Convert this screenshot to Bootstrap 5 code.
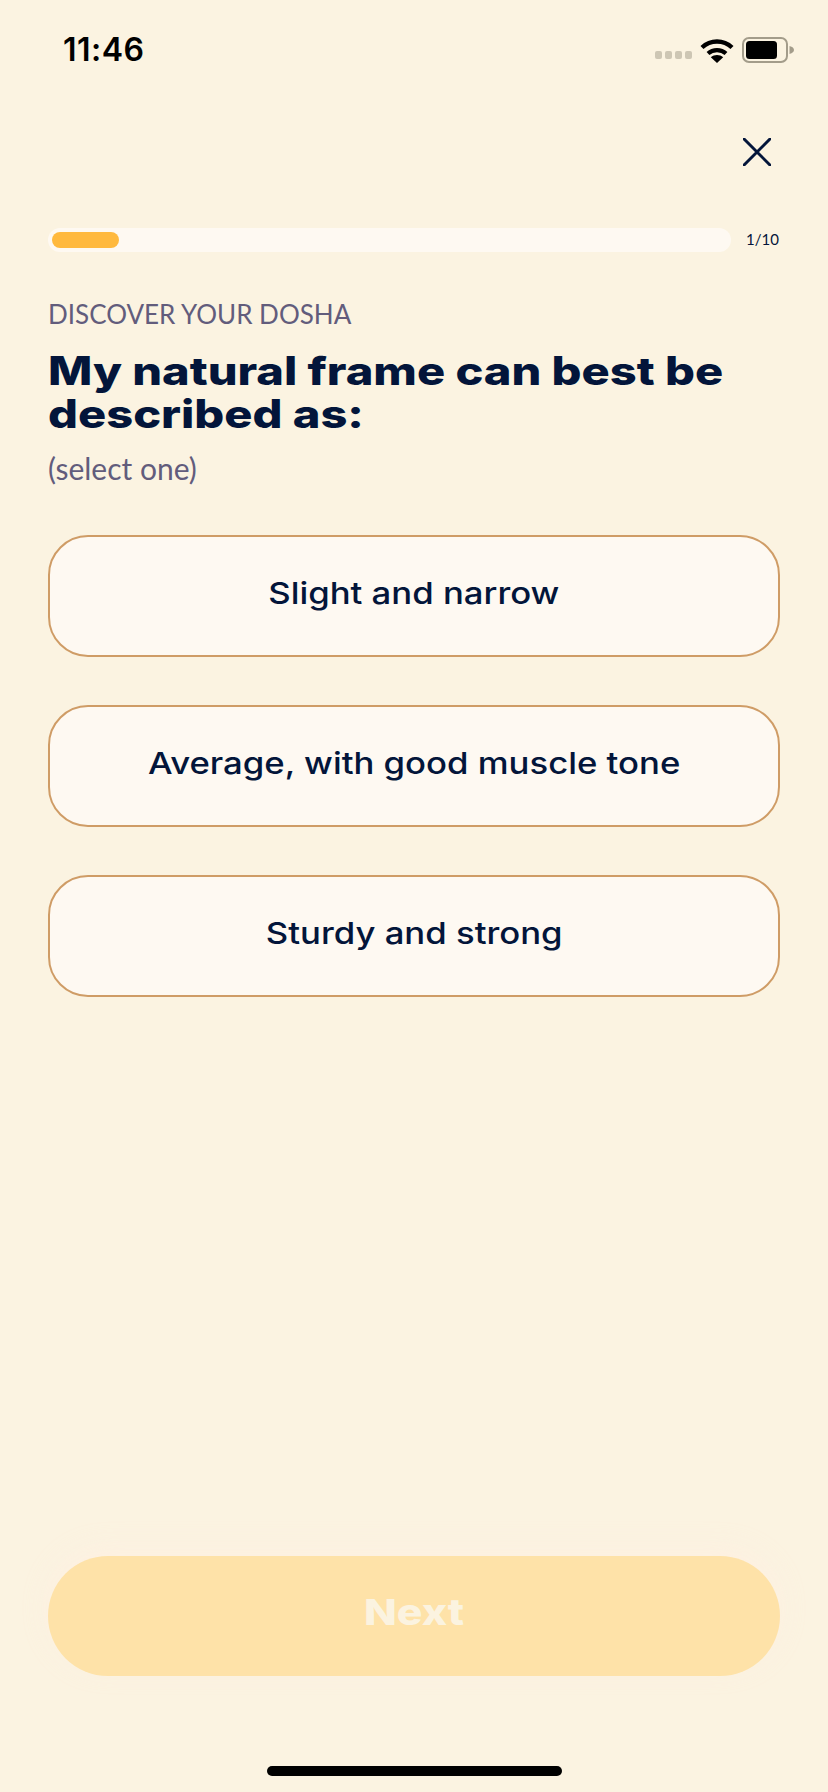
<!DOCTYPE html>
<html lang="en">
<head>
    <meta charset="UTF-8">
    <meta name="viewport" content="width=device-width, initial-scale=1.0">
    <title>Discover your dosha</title>
    <link href="https://cdn.jsdelivr.net/npm/bootstrap@5.3.0/dist/css/bootstrap.min.css" rel="stylesheet">
    <style>
        body {
            background-color: #fbf3e1;
            color: #03153a;
            font-family: "Inter", "Liberation Sans", sans-serif;
        }
        .phone-screen {
            width: 828px;
            height: 1792px;
            padding: 0 48px;
        }
        .status-row {
            height: 100px;
            margin: 0 -14px 0 15px;
        }
        .status-time {
            font-size: 32px;
            font-weight: 600;
            color: #000;
            letter-spacing: 0.5px;
        }
        .signal-dots {
            gap: 3px;
            margin-top: 9px;
        }
        .signal-dots span {
            width: 7px;
            height: 8px;
            border-radius: 2px;
            background-color: #cdc6b4;
        }
        .close-row {
            height: 28px;
            margin: 38px 9px 0 0;
        }
        .close-btn {
            line-height: 0;
            border: 0;
        }
        .progress-row {
            margin-top: 62px;
        }
        .dosha-track {
            width: 683px;
            height: 24px;
            padding: 4px;
            border-radius: 12px;
            background-color: #fef9f2;
        }
        .dosha-track .progress-bar {
            width: 67px;
            border-radius: 8px;
            background-color: #ffb93e;
        }
        .progress-label {
            font-family: "Lato", sans-serif;
            font-size: 15px;
            margin: 0 1px 2px 0;
        }
        .eyebrow {
            font-family: "Lato", sans-serif;
            font-size: 26px;
            line-height: 30px;
            color: #625c7c;
            margin: 46px 0 0;
        }
        .question {
            width: fit-content;
            font-size: 39px;
            font-weight: 800;
            line-height: 43px;
            white-space: nowrap;
            transform: scaleX(1.205);
            transform-origin: left center;
            margin: 20px 0 0;
        }
        .hint {
            font-family: "Lato", sans-serif;
            font-size: 30px;
            line-height: 35px;
            color: #625c7c;
            margin: 16px 0 0;
        }
        .option-list {
            margin-top: 49px;
            gap: 48px;
        }
        .option-btn {
            height: 122px;
            border: 2px solid #cf9c66;
            border-radius: 40px;
            background-color: #fef9f2;
            color: #03153a;
            font-size: 30px;
            font-weight: 500;
            padding-bottom: 10px;
        }
        .option-btn span {
            display: inline-block;
            transform: scaleX(1.157);
        }
        .next-btn {
            height: 120px;
            border: 0;
            border-radius: 60px;
            margin-top: auto;
            background-color: #fee2a8;
            color: #fbf3e0;
            font-size: 36px;
            font-weight: 800;
            padding-bottom: 14px;
            box-shadow: 0 -8px 24px rgba(255, 240, 225, 0.7);
        }
        .next-btn span {
            display: inline-block;
            transform: scaleX(1.19);
        }
        .next-btn:disabled {
            background-color: #fee2a8;
            color: #fbf3e0;
            opacity: 1;
        }
        .home-bar {
            width: 295px;
            height: 10px;
            margin: 90px auto 16px;
            border-radius: 5px;
            background-color: #000;
        }
    </style>
</head>
<body>
    <div class="phone-screen d-flex flex-column">
        <div class="status-row d-flex justify-content-between align-items-center">
            <span class="status-time">11:46</span>
            <div class="d-flex align-items-center gap-2">
                <div class="signal-dots d-flex">
                    <span></span><span></span><span></span><span></span>
                </div>
                <svg width="34" height="25" viewBox="0 0 34 25" fill="none">
                    <path d="M2 9.5C10.5 1.5 23.5 1.5 32 9.5" stroke="#000" stroke-width="4.4"/>
                    <path d="M8 15.5C13 11 21 11 26 15.5" stroke="#000" stroke-width="4.2"/>
                    <path d="M17 25L10.8 19.2C14.4 16.4 19.6 16.4 23.2 19.2Z" fill="#000"/>
                </svg>
                <svg width="52" height="26" viewBox="0 0 52 26" fill="none">
                    <rect x="1" y="1" width="44" height="24" rx="6" stroke="#a39c8a" stroke-width="2"/>
                    <rect x="4" y="4" width="31" height="18" rx="3.5" fill="#000"/>
                    <path d="M47.5 9C50.5 9.8 52 11.2 52 13C52 14.8 50.5 16.2 47.5 17Z" fill="#a39c8a"/>
                </svg>
            </div>
        </div>

        <div class="close-row d-flex justify-content-end">
            <button type="button" class="close-btn btn p-0" aria-label="Close">
                <svg width="28" height="28" viewBox="0 0 28 28" fill="none">
                    <path d="M1 1L27 27M27 1L1 27" stroke="#03153a" stroke-width="3" stroke-linecap="round"/>
                </svg>
            </button>
        </div>

        <div class="progress-row d-flex justify-content-between align-items-center">
            <div class="dosha-track progress">
                <div class="progress-bar"></div>
            </div>
            <span class="progress-label">1/10</span>
        </div>

        <p class="eyebrow">DISCOVER YOUR DOSHA</p>
        <h1 class="question">My natural frame can best be<br>described as:</h1>
        <p class="hint">(select one)</p>

        <div class="option-list d-grid">
            <button type="button" class="option-btn btn"><span>Slight and narrow</span></button>
            <button type="button" class="option-btn btn"><span>Average, with good muscle tone</span></button>
            <button type="button" class="option-btn btn"><span>Sturdy and strong</span></button>
        </div>

        <button type="button" class="next-btn btn w-100" disabled><span>Next</span></button>
        <div class="home-bar flex-shrink-0"></div>
    </div>

    <script src="https://cdn.jsdelivr.net/npm/bootstrap@5.3.0/dist/js/bootstrap.bundle.min.js"></script>
</body>
</html>
